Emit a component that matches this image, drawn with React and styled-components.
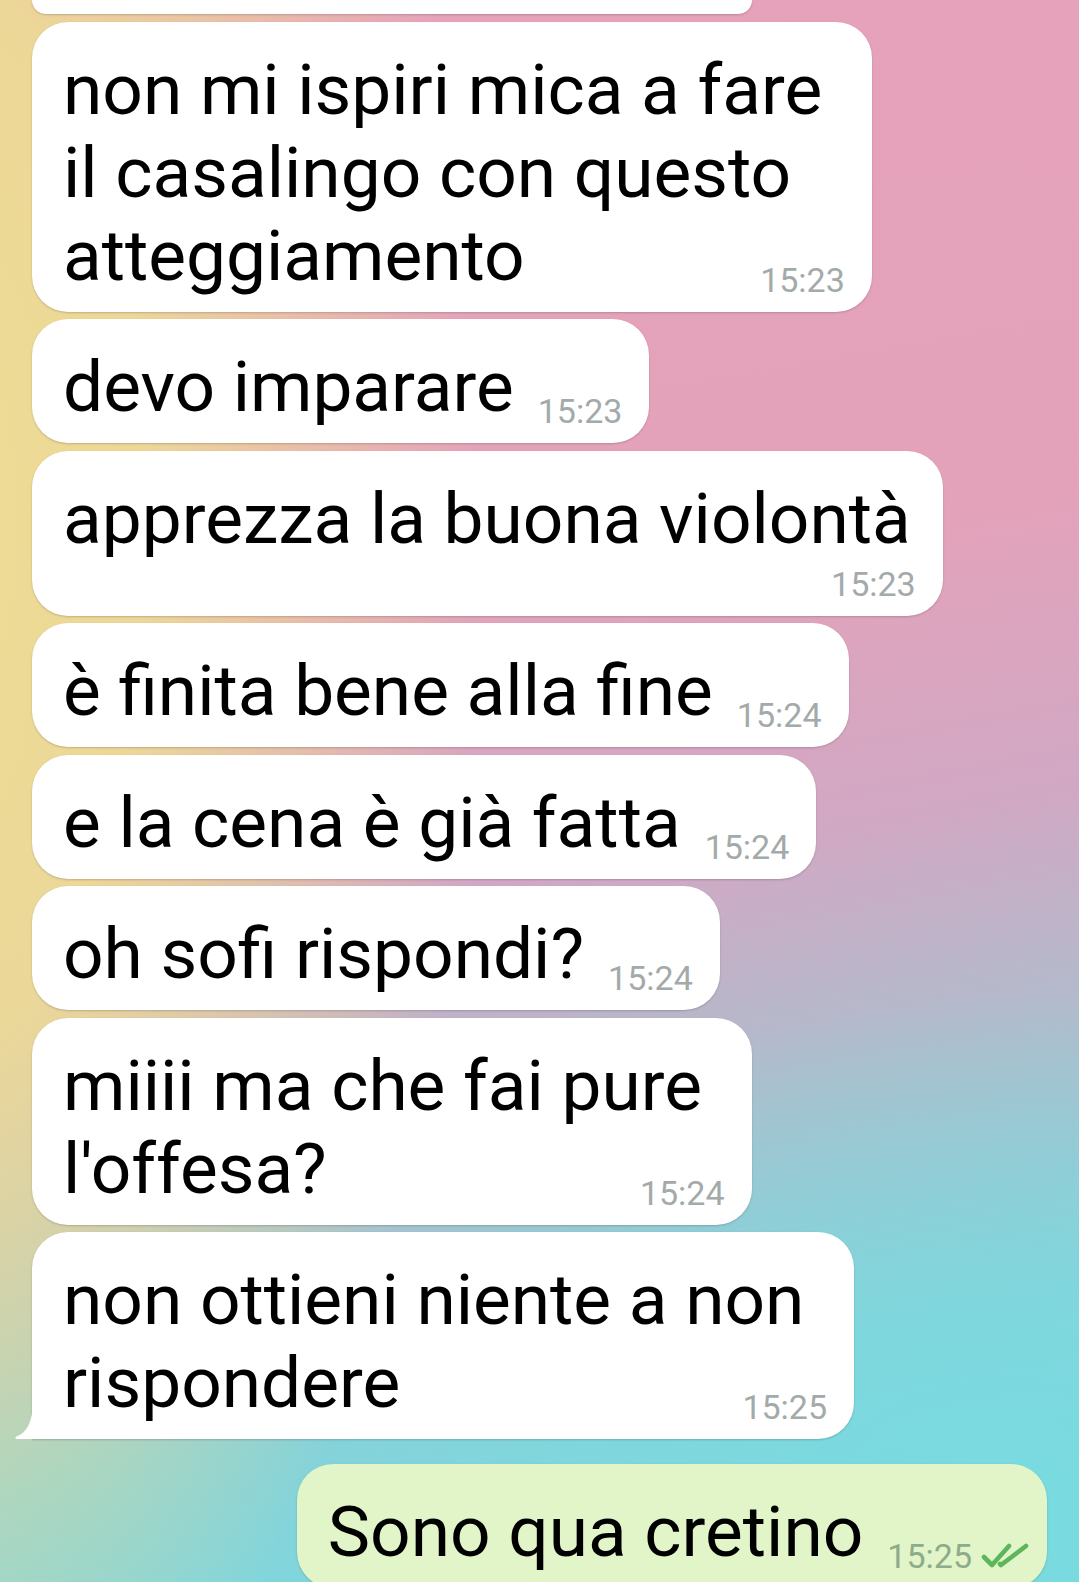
import styled, { createGlobalStyle } from "styled-components";

const GlobalStyle = createGlobalStyle`
  html, body {
    margin: 0;
    padding: 0;
  }
  body {
    font-family: Roboto, "Noto Sans", "Liberation Sans", sans-serif;
  }
`;

const messages = [
  { lines: ["non mi ispiri mica a fare", "il casalingo con questo", "atteggiamento"], time: "15:23" },
  { lines: ["devo imparare"], time: "15:23" },
  { lines: ["apprezza la buona violontà"], time: "15:23", metaBelow: true },
  { lines: ["è finita bene alla fine"], time: "15:24" },
  { lines: ["e la cena è già fatta"], time: "15:24" },
  { lines: ["oh sofi rispondi?"], time: "15:24" },
  { lines: ["miiii ma che fai pure", "l'offesa?"], time: "15:24" },
  { lines: ["non ottieni niente a non", "rispondere"], time: "15:25", tail: true },
  { lines: ["Sono qua cretino"], time: "15:25", out: true },
];

const DoubleCheck = () => (
  <svg width="48" height="26" viewBox="0 0 48 26" fill="none">
    <path
      d="M3 14 L11 22 L28 3"
      stroke="#5db65c"
      strokeWidth="4.6"
      strokeLinecap="round"
      strokeLinejoin="round"
    />
    <path
      d="M19 21 L20 22 L45 3"
      stroke="#5db65c"
      strokeWidth="4.6"
      strokeLinecap="round"
      strokeLinejoin="round"
    />
  </svg>
);

const Tail = () => (
  <TailShape width="18" height="38" viewBox="0 0 18 38">
    <path d="M18 0 C18 20 12 32 1.5 35.5 C0 36 0 38 2 38 L18 38 Z" fill="#fff" />
  </TailShape>
);

const App = () => {
  return (
    <>
      <GlobalStyle />
      <Screen>
        <Thread>
          <Bubble $partial />
          {messages.map((m, i) => (
            <Bubble key={i} $out={m.out} $tail={m.tail}>
              <Text>
                {m.lines.map((line, j) => (
                  <span key={j}>
                    {j < m.lines.length - 1 ? line + "\u00a0" : line}
                    {j < m.lines.length - 1 && <br />}
                  </span>
                ))}
                <Time $below={m.metaBelow} $out={m.out}>
                  {m.time}
                  {m.out && <DoubleCheck />}
                </Time>
              </Text>
              {m.tail && <Tail />}
            </Bubble>
          ))}
        </Thread>
      </Screen>
    </>
  );
};

const Screen = styled.main`
  width: 1079px;
  height: 1582px;
  overflow: hidden;
  background:
    radial-gradient(ellipse 560px 1350px at -80px 520px, rgba(238, 221, 148, 1) 0%, rgba(238, 221, 148, 0.9) 40%, rgba(238, 221, 148, 0) 100%),
    radial-gradient(ellipse 700px 500px at 1000px 1500px, rgba(120, 219, 224, 0.9) 0%, rgba(120, 219, 224, 0) 100%),
    linear-gradient(170deg, #e6a2bb 0%, #e4a2ba 38%, #d1a8c4 55%, #abbfcd 70%, #86d2d9 84%, #7bd9de 100%);
`;

const Thread = styled.div`
  display: flex;
  flex-direction: column;
  align-items: flex-start;
  gap: 7.5px;
  padding: 0 32px;
`;

const Bubble = styled.div`
  position: relative;
  box-sizing: border-box;
  padding: 26px 32px 15px 31px;
  border-radius: 36px;
  background: ${({ $out }) => ($out ? "#e1f5c9" : "#ffffff")};
  box-shadow: 0 1px 2px rgba(60, 60, 60, 0.25);
  align-self: ${({ $out }) => ($out ? "flex-end" : "flex-start")};
  margin-top: ${({ $out }) => ($out ? "17px" : "0")};
  ${({ $tail }) => $tail && "border-bottom-left-radius: 0;"}
  ${({ $partial }) =>
    $partial &&
    `
    width: 720px;
    height: 14px;
    padding: 0;
    border-radius: 0 0 36px 36px;
  `}
`;

const Text = styled.div`
  display: flow-root;
  white-space: nowrap;
  font-size: 71.2px;
  line-height: 83px;
  color: #000;
`;

const Time = styled.span`
  display: flex;
  align-items: center;
  justify-content: flex-end;
  gap: 9px;
  font-size: 34px;
  line-height: 34px;
  color: ${({ $out }) => ($out ? "#8eab8b" : "#a2aaaa")};
  ${({ $below, $out }) =>
    $below
      ? "margin: 7px -5px 0 0;"
      : `float: right; margin: 49px ${$out ? "-14px" : "-5px"} 0 24px;`}
`;

const TailShape = styled.svg`
  position: absolute;
  left: -17px;
  bottom: 0;
`;

export default App;
